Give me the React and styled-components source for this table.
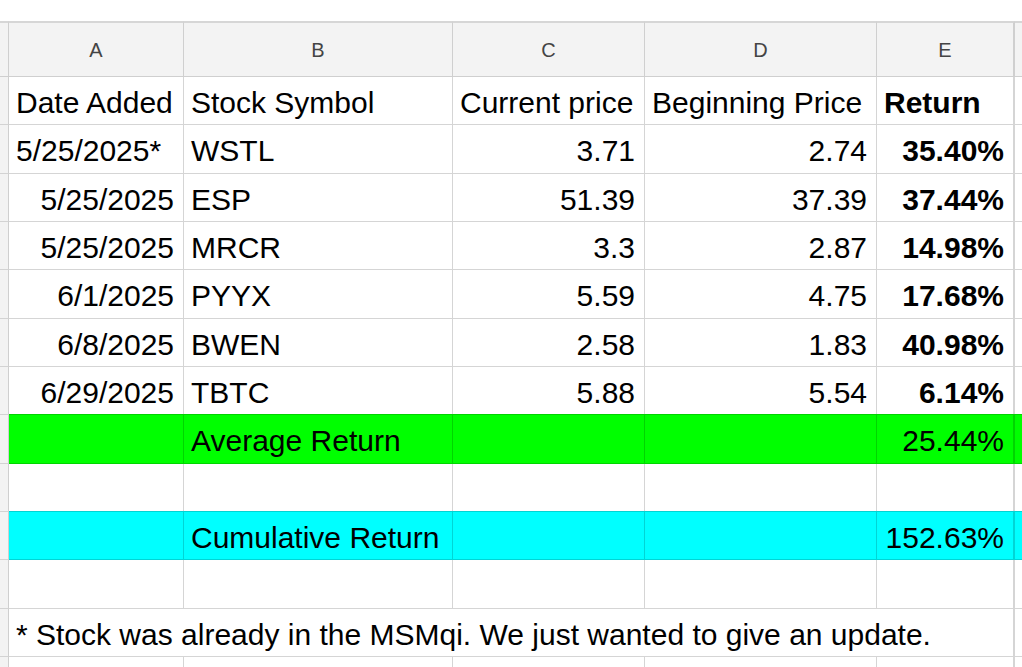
import React from 'react';
import styled, { createGlobalStyle } from 'styled-components';

const GlobalStyle = createGlobalStyle`
  html, body {
    margin: 0;
    padding: 0;
    background: #fff;
    overflow: hidden;
  }
  body {
    font-family: "Liberation Sans", Arial, sans-serif;
  }
`;

const Page = styled.div`
  width: 1022px;
  height: 667px;
  padding-top: 21px;
  box-sizing: border-box;
  overflow: hidden;
`;

const Sheet = styled.div`
  display: grid;
  grid-template-columns: 9px 175px 269px 192px 232px 138px 1fr;
  grid-template-rows: 56px repeat(13, 48.333px);
`;

const LINE = 'rgba(0, 0, 0, 0.165)';

const Corner = styled.div`
  box-sizing: border-box;
  background: #f3f3f3;
  border-top: 2px solid #d6d6d6;
  border-bottom: 1px solid #cfcfcf;
  border-right: 1px solid #cfcfcf;
`;

const ColHead = styled.div`
  box-sizing: border-box;
  display: flex;
  align-items: center;
  justify-content: center;
  background: #f3f3f3;
  border-top: 2px solid #d6d6d6;
  border-bottom: 1px solid #cfcfcf;
  border-right: ${p => (p.$thick ? '2px' : '1px')} solid #cfcfcf;
  color: #444;
  font-size: 20px;
  padding-top: 1px;
`;

const RowNum = styled.div`
  box-sizing: border-box;
  background: #f3f3f3;
  border-bottom: 1px solid #d3d3d3;
  border-right: 1px solid #cfcfcf;
`;

const Cell = styled.div`
  box-sizing: border-box;
  display: flex;
  align-items: center;
  justify-content: ${p => (p.$right ? 'flex-end' : 'flex-start')};
  padding: 5px ${p => (p.$right ? '9px' : '6px')} 0 7px;
  background: ${p => p.$fill || '#fff'};
  border-bottom: 1px solid ${LINE};
  border-right: ${p => (p.$thick ? '2px' : '1px')} solid ${LINE};
  box-shadow: ${p => (p.$fill ? `0 -1px 0 ${p.$edge}` : 'none')};
  grid-column: ${p => (p.$span ? `span ${p.$span}` : 'auto')};
  color: #000;
  font-size: 30px;
  font-weight: ${p => (p.$bold ? 700 : 400)};
  white-space: nowrap;
  line-height: 1;
`;

const letters = ['A', 'B', 'C', 'D', 'E', ''];

const fills = {
  green: { bg: '#00ff00', edge: '#00d400' },
  cyan: { bg: '#00ffff', edge: '#00d4d4' },
};

// each cell: [text, rightAligned, bold]
const rows = [
  { cells: [['Date Added'], ['Stock Symbol'], ['Current price'], ['Beginning Price'], ['Return', false, true]] },
  { cells: [['5/25/2025*'], ['WSTL'], ['3.71', true], ['2.74', true], ['35.40%', true, true]] },
  { cells: [['5/25/2025', true], ['ESP'], ['51.39', true], ['37.39', true], ['37.44%', true, true]] },
  { cells: [['5/25/2025', true], ['MRCR'], ['3.3', true], ['2.87', true], ['14.98%', true, true]] },
  { cells: [['6/1/2025', true], ['PYYX'], ['5.59', true], ['4.75', true], ['17.68%', true, true]] },
  { cells: [['6/8/2025', true], ['BWEN'], ['2.58', true], ['1.83', true], ['40.98%', true, true]] },
  { cells: [['6/29/2025', true], ['TBTC'], ['5.88', true], ['5.54', true], ['6.14%', true, true]] },
  { fill: 'green', cells: [[''], ['Average Return'], [''], [''], ['25.44%', true]] },
  { cells: [[''], [''], [''], [''], ['']] },
  { fill: 'cyan', cells: [[''], ['Cumulative Return'], [''], [''], ['152.63%', true]] },
  { cells: [[''], [''], [''], [''], ['']] },
  { note: '* Stock was already in the MSMqi. We just wanted to give an update.' },
  { cells: [[''], [''], [''], [''], ['']] },
];

function App() {
  return (
    <Page>
      <GlobalStyle />
      <Sheet>
        <Corner />
        {letters.map((l, i) => (
          <ColHead key={i} $thick={i === 4}>{l}</ColHead>
        ))}

        {rows.map((row, r) => {
          const f = row.fill ? fills[row.fill] : null;
          return (
            <React.Fragment key={r}>
              <RowNum />
              {row.note ? (
                <Cell $span={5} $thick>{row.note}</Cell>
              ) : (
                row.cells.map(([text, right, bold], c) => (
                  <Cell
                    key={c}
                    $right={right}
                    $bold={bold}
                    $thick={c === 4}
                    $fill={f && f.bg}
                    $edge={f && f.edge}
                  >
                    {text}
                  </Cell>
                ))
              )}
              <Cell $fill={f && f.bg} $edge={f && f.edge} />
            </React.Fragment>
          );
        })}
      </Sheet>
    </Page>
  );
}

export default App;
